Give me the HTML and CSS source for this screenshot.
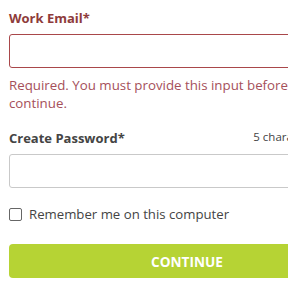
FILE: index.html
```html
<!DOCTYPE html>
<html>
<head>
<meta charset="utf-8">
<link rel="stylesheet" href="styles.css">
</head>
<body>
<form class="form">
  <div class="field">
    <label class="label label-error">Work Email*</label>
    <div class="input input-error"></div>
    <p class="error">Required. You must provide this input before you can continue.</p>
  </div>
  <div class="field">
    <div class="label-row">
      <label class="label">Create Password*</label>
      <span class="hint">5 characters minimum</span>
    </div>
    <div class="input"></div>
  </div>
  <div class="remember">
    <span class="checkbox"></span>
    <span class="remember-text">Remember me on this computer</span>
  </div>
  <button type="button" class="btn">CONTINUE</button>
</form>
</body>
</html>
```
FILE: styles.css
```css
html, body {
  margin: 0;
  padding: 0;
  overflow: hidden;
  background: #fff;
}
body {
  font-family: "Open Sans", "DejaVu Sans", sans-serif;
  color: #444;
}
.form {
  width: 356px;
  padding: 9px 0 0 9px;
  display: flex;
  flex-direction: column;
}
.field {
  display: flex;
  flex-direction: column;
}
.label {
  font-size: 13px;
  line-height: 19px;
  font-weight: 700;
  color: #444;
}
.label-error {
  color: #8e3b3b;
}
.label-row {
  display: flex;
  justify-content: space-between;
  align-items: flex-start;
  margin-top: 17px;
}
.hint {
  font-size: 11.5px;
  line-height: 16px;
  color: #444;
  margin-right: -9px;
}
.input {
  margin-top: 6px;
  height: 32px;
  border: 1px solid #c9c9c9;
  border-radius: 3px;
  background: #fff;
}
.input-error {
  border-color: #a9474a;
}
.error {
  margin: 8px 0 0 0;
  font-size: 13.3px;
  line-height: 18px;
  color: #a5505a;
}
.remember {
  display: flex;
  align-items: center;
  gap: 7px;
  margin-top: 17px;
}
.checkbox {
  width: 11px;
  height: 11px;
  border: 1px solid #666;
  border-radius: 2px;
  background: #fff;
}
.remember-text {
  font-size: 13.2px;
  line-height: 19px;
  color: #444;
}
.btn {
  margin-top: 20px;
  height: 34px;
  border: none;
  border-radius: 4px;
  background: #b6d334;
  color: #fff;
  font-family: "Open Sans", "DejaVu Sans", sans-serif;
  font-weight: 700;
  font-size: 13.6px;
  padding: 0;
}
```
